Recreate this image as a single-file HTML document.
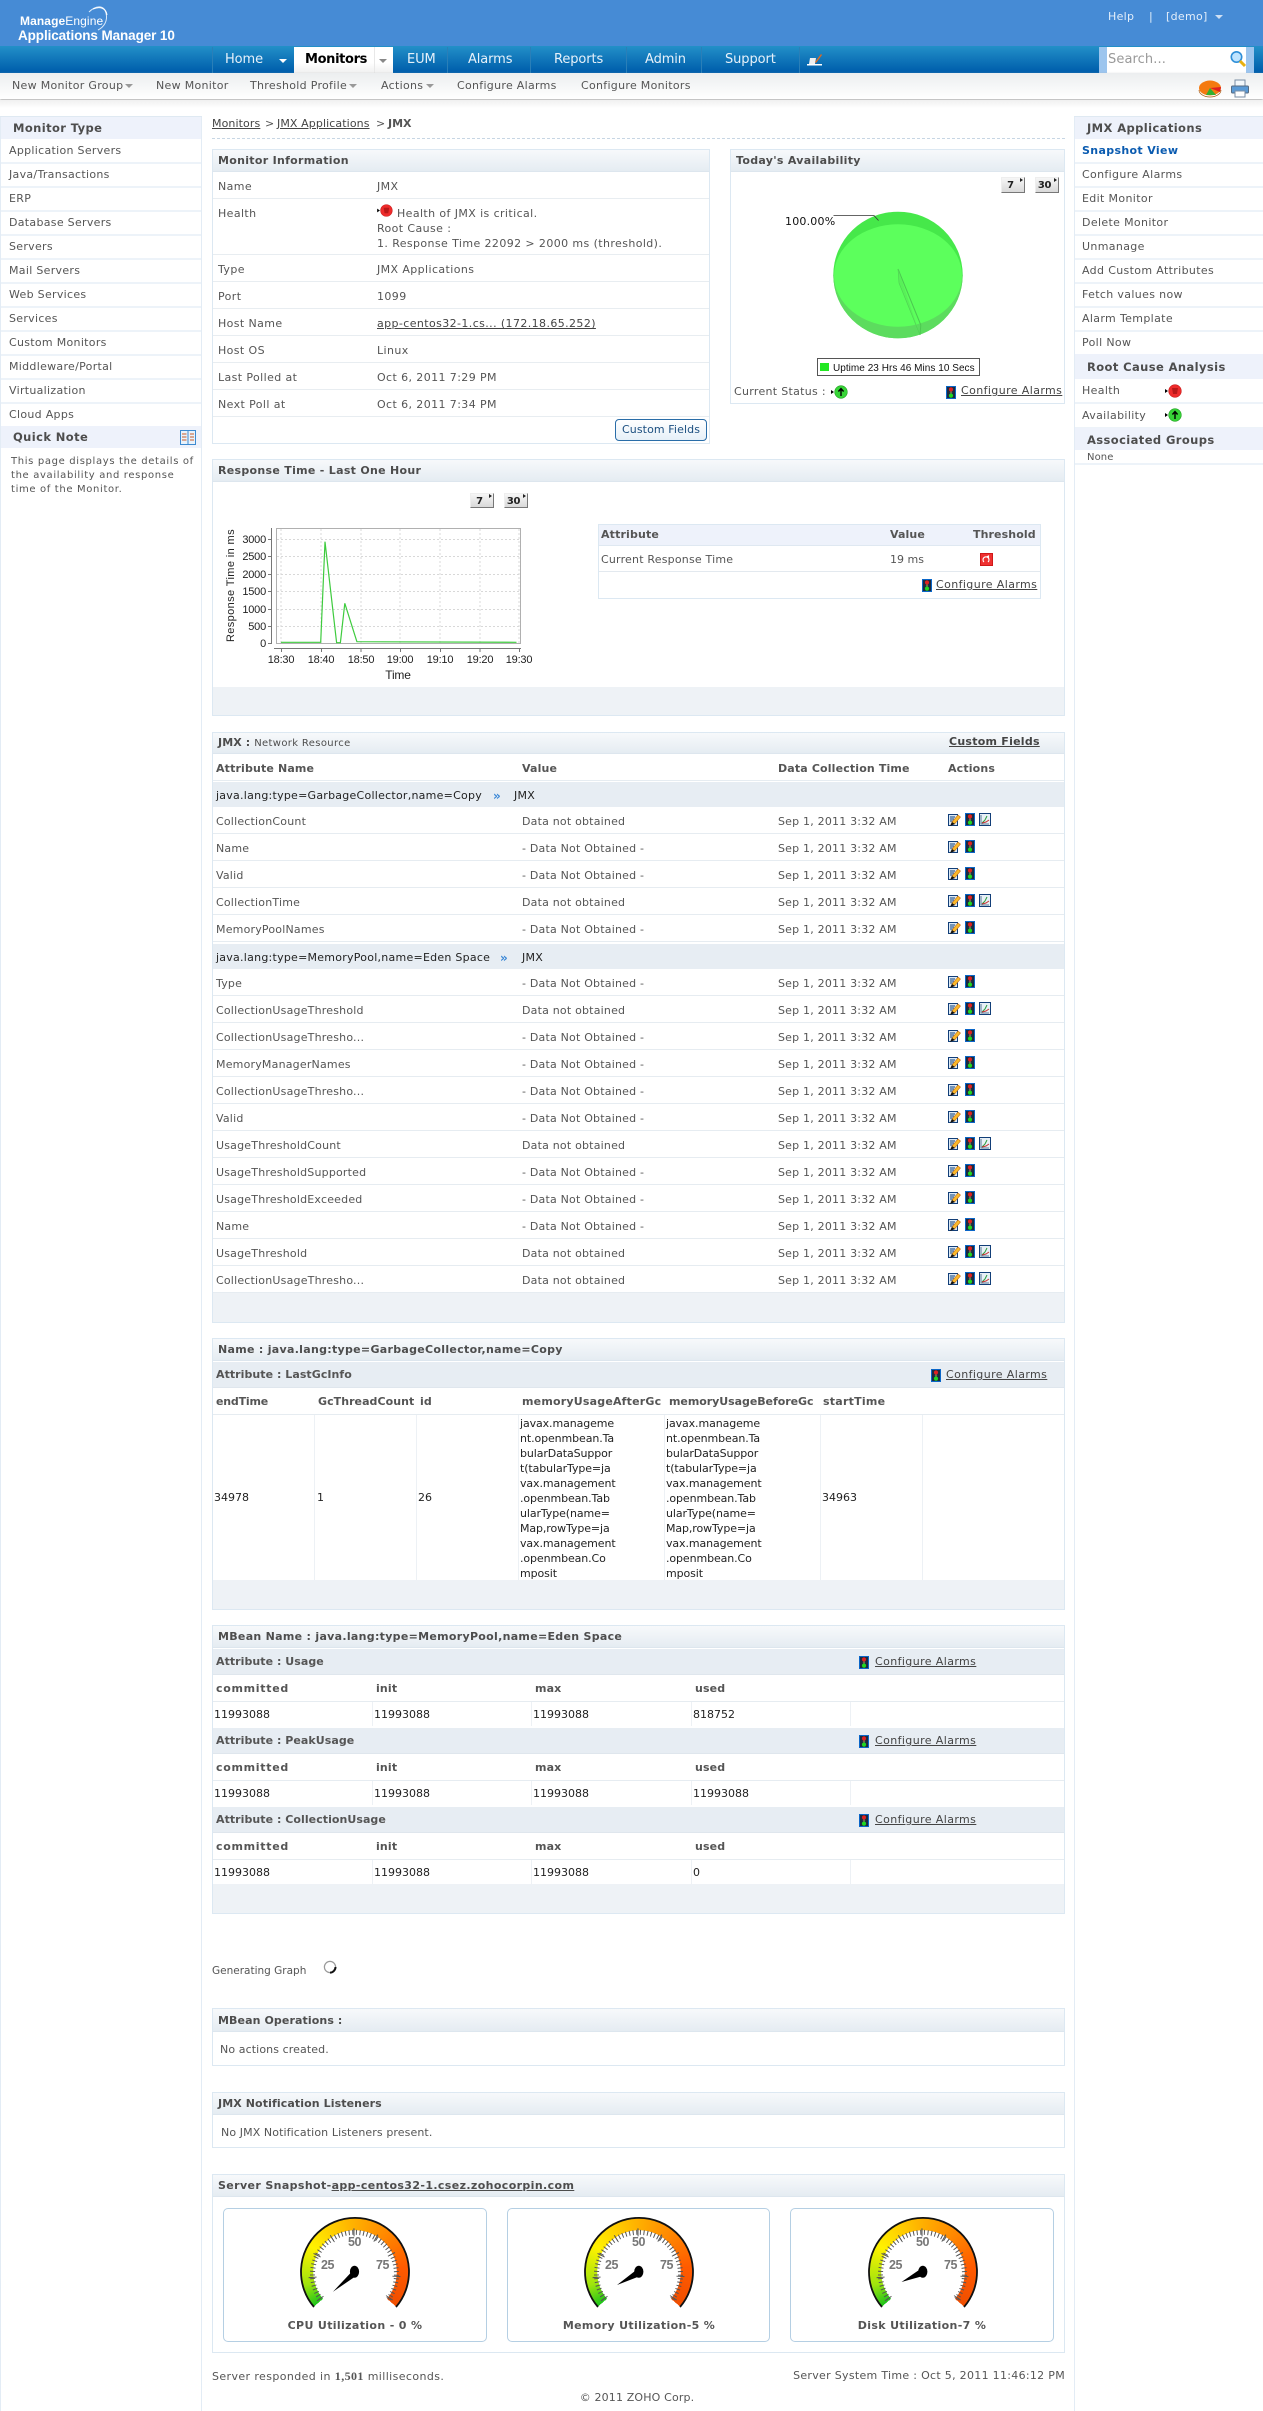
<!DOCTYPE html>
<html lang="en"><head><meta charset="utf-8"><title>JMX - Applications Manager</title>
<style>
html,body{margin:0;padding:0;background:#fff}
body{position:relative;width:1263px;height:2411px;overflow:hidden;font:11px/16px "DejaVu Sans","Liberation Sans",sans-serif;color:#555;letter-spacing:.4px}
div,span,a,b{position:absolute;white-space:nowrap}
a{color:#444;text-decoration:underline}
b{font-weight:bold}
.box{box-sizing:border-box;border:1px solid #dce8f2;background:#fff}
.hd{box-sizing:border-box;left:212px;width:853px;background:linear-gradient(#f7f9fb,#e5ecf2);border:1px solid #dce8f2;border-bottom:1px solid #dde6ee;font-weight:bold;color:#4d4d4d;padding-left:5px;letter-spacing:.35px}
.sh{background:#eef2fb;font-weight:bold;color:#4d4d4d;font-size:11.5px}
.it{left:1px;width:200px;height:23px;border-bottom:2px solid #edf3f9;letter-spacing:.3px}
.it span{left:8px;top:4px}
.ir{left:1075px;width:188px;height:23px;border-bottom:2px solid #edf3f9;letter-spacing:.35px}
.ir span{left:7px;top:4px}
.nav{color:#e6f1fa;font-size:13px;line-height:16px;top:52px;font-family:"DejaVu Sans",sans-serif;letter-spacing:-.1px}
.sep{top:47px;width:1px;height:26px;background:#2a7fb8}
.sub{top:78px;color:#555;letter-spacing:.3px}
.ar{width:0;height:0;border-left:4px solid transparent;border-right:4px solid transparent;border-top:4px solid #999}
.mi{left:213px;width:496px;border-bottom:1px solid #e8edf1}
.mi span{top:7px;left:5px}.mi i{position:absolute;font-style:normal;top:7px;left:164px;white-space:nowrap}
.btn{box-sizing:border-box;background:linear-gradient(#f6f6f6,#d9d9d9);border-right:1px solid #777;border-bottom:1px solid #777;border-top:1px solid #eee;border-left:1px solid #eee;font-weight:bold;color:#222;font-size:10px;text-align:center;line-height:15px;letter-spacing:-.3px;padding-right:5px}
.btn::after{content:"";position:absolute;right:1px;top:0;border-left:3px solid #222;border-top:2.5px solid transparent;border-bottom:2.5px solid transparent}
.r{left:213px;width:851px;height:26px;border-bottom:1px solid #e6ecf1;background:#fff}
.r span{top:7px;letter-spacing:.2px}.r .a{left:3px}.r .b{left:309px}.r .c{left:565px}
.gr{left:213px;width:851px;height:25px;background:#e7edf3;border-bottom:1px solid #dfe6ed;color:#222;letter-spacing:.25px}
.gr span{top:6px}
.th{font-weight:bold;color:#555;letter-spacing:.15px}
.cm{letter-spacing:.7px}
.ft{left:213px;width:851px;background:#eef2f6}
.d{color:#222;letter-spacing:0}
.v{width:1px;background:#edf1f5}
.at{left:213px;width:851px;height:25px;background:#e7edf3;border-bottom:1px solid #dfe6ed;font-weight:bold;color:#555;letter-spacing:.05px}
.at span{top:5px;left:3px}
.ln{left:213px;width:851px;height:1px;background:#e6ecf1}
.gb{box-sizing:border-box;top:2208px;height:134px;border:1px solid #b5cfe3;border-radius:5px;background:#fff}
.gc{font-weight:bold;color:#555;top:2318px;width:264px;text-align:center;letter-spacing:.35px}
.ga{top:2218px;width:108px;height:108px;border-radius:50%;background:conic-gradient(from 230deg,#1fc41a 0deg,#9fe40d 25deg,#fff200 70deg,#ffb400 125deg,#ff8c00 165deg,#ff5a00 215deg,#f04e00 260deg,transparent 260deg);-webkit-mask:radial-gradient(circle,transparent 41.5px,#000 42px);mask:radial-gradient(circle,transparent 41.5px,#000 42px)}
</style></head><body>

<!-- top bar -->
<div style="left:0;top:0;width:1263px;height:47px;background:#468bd5"></div>
<div style="left:0;top:46px;width:1263px;height:27px;background:linear-gradient(#2390c8,#0160ad 90%)"></div>
<div style="left:20px;top:14px;color:#fff;font:12px/14px 'Liberation Sans',sans-serif;letter-spacing:.1px"><span style="position:static;font-weight:bold">Manage</span>Engine</div>
<div style="left:18px;top:28px;color:#fff;font:bold 13.5px/16px 'Liberation Sans',sans-serif;letter-spacing:-.1px">Applications Manager 10</div>
<div style="left:1108px;top:9px;color:#e3eefa;letter-spacing:.3px">Help</div>
<div style="left:1149px;top:9px;color:#e3eefa">|</div>
<div style="left:1166px;top:9px;color:#e3eefa;letter-spacing:.3px">[demo]</div>
<div class="ar" style="left:1215px;top:15px;border-top-color:#cfe0f4"></div>

<div class="sep" style="left:212px"></div>
<div class="nav" style="left:225px">Home</div>
<div class="ar" style="left:279px;top:59px;border-top-color:#fff"></div>
<div style="left:294px;top:47px;width:99px;height:26px;background:linear-gradient(#fff 60%,#f0f0f0)"></div>
<div class="nav" style="left:305px;color:#000;font-weight:bold;letter-spacing:-.35px">Monitors</div>
<div style="left:374px;top:47px;width:1px;height:26px;background:#e8e8e8"></div>
<div class="ar" style="left:379px;top:59px;border-top-color:#888"></div>
<div class="nav" style="left:407px">EUM</div>
<div class="sep" style="left:447px"></div>
<div class="nav" style="left:468px">Alarms</div>
<div class="sep" style="left:530px"></div>
<div class="nav" style="left:554px">Reports</div>
<div class="sep" style="left:626px"></div>
<div class="nav" style="left:645px">Admin</div>
<div class="sep" style="left:701px"></div>
<div class="nav" style="left:725px">Support</div>
<div class="sep" style="left:799px"></div>
<div style="left:1099px;top:47px;width:155px;height:26px;background:#9cc5ee"></div>
<div style="left:1107px;top:47px;width:139px;height:26px;background:#fff"></div>
<div style="left:1108px;top:52px;color:#999;font-size:13px;line-height:16px;letter-spacing:.1px">Search...</div>

<!-- subnav -->
<div style="left:0;top:73px;width:1263px;height:26px;background:linear-gradient(#eceeef,#fff);box-shadow:0 1px 2px #aaa"></div>
<div style="left:0;top:100px;width:1263px;height:8px;background:linear-gradient(#f0f0f0,#fff)"></div>
<div class="sub" style="left:12px">New Monitor Group</div><div class="ar" style="left:125px;top:84px"></div>
<div class="sub" style="left:156px">New Monitor</div>
<div class="sub" style="left:250px">Threshold Profile</div><div class="ar" style="left:349px;top:84px"></div>
<div class="sub" style="left:381px">Actions</div><div class="ar" style="left:426px;top:84px"></div>
<div class="sub" style="left:457px">Configure Alarms</div>
<div class="sub" style="left:581px">Configure Monitors</div>

<!-- side borders -->
<div style="left:0;top:116px;width:1px;height:2295px;background:#e3ecf5"></div>
<div style="left:201px;top:116px;width:1px;height:2295px;background:#e3ecf5"></div>
<div style="left:1074px;top:116px;width:1px;height:2295px;background:#e3ecf5"></div>
<div style="left:0;top:116px;width:202px;height:1px;background:#dfe9f2"></div>
<div style="left:1074px;top:116px;width:189px;height:1px;background:#dfe9f2"></div>

<!-- left sidebar -->
<div class="sh" style="left:1px;top:117px;width:200px;height:22px"><span style="left:12px;top:3px">Monitor Type</span></div>
<div class="it" style="top:139px"><span>Application Servers</span></div>
<div class="it" style="top:163px"><span>Java/Transactions</span></div>
<div class="it" style="top:187px"><span>ERP</span></div>
<div class="it" style="top:211px"><span>Database Servers</span></div>
<div class="it" style="top:235px"><span>Servers</span></div>
<div class="it" style="top:259px"><span>Mail Servers</span></div>
<div class="it" style="top:283px"><span>Web Services</span></div>
<div class="it" style="top:307px"><span>Services</span></div>
<div class="it" style="top:331px"><span>Custom Monitors</span></div>
<div class="it" style="top:355px"><span>Middleware/Portal</span></div>
<div class="it" style="top:379px"><span>Virtualization</span></div>
<div class="it" style="top:403px;border:0"><span>Cloud Apps</span></div>
<div class="sh" style="left:1px;top:426px;width:200px;height:22px"><span style="left:12px;top:3px">Quick Note</span></div>
<div style="left:11px;top:454px;font-size:10px;letter-spacing:.65px">This page displays the details of</div>
<div style="left:11px;top:468px;font-size:10px;letter-spacing:.65px">the availability and response</div>
<div style="left:11px;top:482px;font-size:10px;letter-spacing:.65px">time of the Monitor.</div>

<!-- right sidebar -->
<div class="sh" style="left:1075px;top:117px;width:188px;height:22px"><span style="left:12px;top:3px">JMX Applications</span></div>
<div class="ir" style="top:139px"><span style="font-weight:bold;color:#0a5bb0">Snapshot View</span></div>
<div class="ir" style="top:163px"><span>Configure Alarms</span></div>
<div class="ir" style="top:187px"><span>Edit Monitor</span></div>
<div class="ir" style="top:211px"><span>Delete Monitor</span></div>
<div class="ir" style="top:235px"><span>Unmanage</span></div>
<div class="ir" style="top:259px"><span>Add Custom Attributes</span></div>
<div class="ir" style="top:283px"><span>Fetch values now</span></div>
<div class="ir" style="top:307px"><span>Alarm Template</span></div>
<div class="ir" style="top:331px;border:0"><span>Poll Now</span></div>
<div class="sh" style="left:1075px;top:354px;width:188px;height:25px"><span style="left:12px;top:5px">Root Cause Analysis</span></div>
<div class="ir" style="top:379px"><span>Health</span></div>
<div class="ir" style="top:403px;height:24px"><span style="top:5px">Availability</span></div>
<div class="sh" style="left:1075px;top:428px;width:188px;height:22px"><span style="left:12px;top:4px">Associated Groups</span></div>
<div class="ir" style="top:450px;height:13px"><span style="left:12px;top:0;font-size:10px;letter-spacing:.1px">None</span></div>

<!-- breadcrumb -->
<a style="left:212px;top:116px;letter-spacing:.1px">Monitors</a><div style="left:265px;top:116px">&gt;</div>
<a style="left:277px;top:116px;letter-spacing:.1px">JMX Applications</a><div style="left:376px;top:116px">&gt;</div>
<b style="left:388px;top:116px;letter-spacing:0">JMX</b>
<div style="left:212px;top:138px;width:853px;height:0;border-top:1px dashed #c7d6e4"></div>

<!-- monitor info -->
<div class="box" style="left:212px;top:149px;width:498px;height:295px"></div>
<div class="hd" style="top:149px;width:498px;height:23px;line-height:22px;letter-spacing:.3px">Monitor Information</div>
<div class="mi" style="top:172px;height:26px"><span>Name</span><i>JMX</i></div>
<div class="mi" style="top:199px;height:55px"><span>Health</span>
<i style="left:184px">Health of JMX is critical.</i><i style="top:22px">Root Cause :</i><i style="top:37px">1. Response Time 22092 &gt; 2000 ms (threshold).</i></div>
<div class="mi" style="top:255px;height:26px"><span>Type</span><i>JMX Applications</i></div>
<div class="mi" style="top:282px;height:26px"><span>Port</span><i>1099</i></div>
<div class="mi" style="top:309px;height:26px"><span>Host Name</span><i style="text-decoration:underline;color:#444">app-centos32-1.cs... (172.18.65.252)</i></div>
<div class="mi" style="top:336px;height:26px"><span>Host OS</span><i>Linux</i></div>
<div class="mi" style="top:363px;height:26px"><span>Last Polled at</span><i>Oct 6, 2011 7:29 PM</i></div>
<div class="mi" style="top:390px;height:26px"><span>Next Poll at</span><i>Oct 6, 2011 7:34 PM</i></div>
<div style="box-sizing:border-box;left:615px;top:419px;width:92px;height:22px;border:1px solid #2a6da8;border-radius:4px;background:linear-gradient(#fff,#e6f0f8);color:#1c4f80;text-align:center;line-height:20px;letter-spacing:.1px">Custom Fields</div>

<!-- availability -->
<div class="box" style="left:730px;top:149px;width:335px;height:255px"></div>
<div class="hd" style="left:730px;top:149px;width:335px;height:23px;line-height:22px;letter-spacing:.3px">Today's Availability</div>
<div class="btn" style="left:1001px;top:177px;width:24px;height:16px">7</div>
<div class="btn" style="left:1035px;top:177px;width:24px;height:16px">30</div>
<div style="left:785px;top:214px;color:#111;letter-spacing:.2px">100.00%</div>
<div style="box-sizing:border-box;left:817px;top:358px;width:163px;height:18px;border:1px solid #555;background:#fff"></div>
<div style="left:820px;top:363px;width:9px;height:8px;background:#22e822"></div>
<div style="left:734px;top:384px;letter-spacing:.3px">Current Status :</div>
<a style="left:961px;top:383px;letter-spacing:.4px">Configure Alarms</a>

<!-- response time -->
<div class="box" style="left:212px;top:459px;width:853px;height:257px"></div>
<div class="hd" style="top:459px;height:23px;line-height:22px;letter-spacing:.3px">Response Time - Last One Hour</div>
<div class="btn" style="left:470px;top:493px;width:24px;height:15px">7</div>
<div class="btn" style="left:504px;top:493px;width:24px;height:15px">30</div>
<div class="box" style="left:598px;top:524px;width:443px;height:75px"></div>
<div style="left:599px;top:525px;width:441px;height:20px;background:#eef2fb;border-bottom:1px solid #dfe8f1"></div>
<b style="left:601px;top:527px;letter-spacing:.15px">Attribute</b><b style="left:890px;top:527px;letter-spacing:.1px">Value</b><b style="left:973px;top:527px;letter-spacing:.1px">Threshold</b>
<div style="left:601px;top:552px;letter-spacing:.2px">Current Response Time</div><div style="left:890px;top:552px;letter-spacing:0">19 ms</div>
<div style="left:599px;top:571px;width:441px;height:1px;background:#e3e9ef"></div>
<a style="left:936px;top:577px;letter-spacing:.4px">Configure Alarms</a>
<div class="ft" style="top:687px;height:28px"></div>

<!-- JMX table -->
<div class="box" style="left:212px;top:732px;width:853px;height:591px"></div>
<div class="hd" style="top:732px;height:22px;line-height:20px;letter-spacing:.1px">JMX : <span style="position:static;font-weight:normal;font-size:10px;letter-spacing:.35px">Network Resource</span></div>
<a style="left:949px;top:734px;font-weight:bold;letter-spacing:.25px">Custom Fields</a>
<div class="th" style="left:216px;top:761px">Attribute Name</div><div class="th" style="left:522px;top:761px">Value</div>
<div class="th" style="left:778px;top:761px">Data Collection Time</div><div class="th" style="left:948px;top:761px">Actions</div>
<div class="ln" style="top:780px"></div>
<div class="gr" style="top:782px"><span style="left:3px">java.lang:type=GarbageCollector,name=Copy</span><span style="left:280px;color:#3a87d6;font-weight:bold;font-size:12px">»</span><span style="left:301px">JMX</span></div>
<div class="r" style="top:807px"><span class="a">CollectionCount</span><span class="b">Data not obtained</span><span class="c">Sep 1, 2011 3:32 AM</span></div>
<div class="r" style="top:834px"><span class="a">Name</span><span class="b">- Data Not Obtained -</span><span class="c">Sep 1, 2011 3:32 AM</span></div>
<div class="r" style="top:861px"><span class="a">Valid</span><span class="b">- Data Not Obtained -</span><span class="c">Sep 1, 2011 3:32 AM</span></div>
<div class="r" style="top:888px"><span class="a">CollectionTime</span><span class="b">Data not obtained</span><span class="c">Sep 1, 2011 3:32 AM</span></div>
<div class="r" style="top:915px"><span class="a">MemoryPoolNames</span><span class="b">- Data Not Obtained -</span><span class="c">Sep 1, 2011 3:32 AM</span></div>
<div class="gr" style="top:944px"><span style="left:3px">java.lang:type=MemoryPool,name=Eden Space</span><span style="left:287px;color:#3a87d6;font-weight:bold;font-size:12px">»</span><span style="left:309px">JMX</span></div>
<div class="r" style="top:969px"><span class="a">Type</span><span class="b">- Data Not Obtained -</span><span class="c">Sep 1, 2011 3:32 AM</span></div>
<div class="r" style="top:996px"><span class="a">CollectionUsageThreshold</span><span class="b">Data not obtained</span><span class="c">Sep 1, 2011 3:32 AM</span></div>
<div class="r" style="top:1023px"><span class="a">CollectionUsageThresho...</span><span class="b">- Data Not Obtained -</span><span class="c">Sep 1, 2011 3:32 AM</span></div>
<div class="r" style="top:1050px"><span class="a">MemoryManagerNames</span><span class="b">- Data Not Obtained -</span><span class="c">Sep 1, 2011 3:32 AM</span></div>
<div class="r" style="top:1077px"><span class="a">CollectionUsageThresho...</span><span class="b">- Data Not Obtained -</span><span class="c">Sep 1, 2011 3:32 AM</span></div>
<div class="r" style="top:1104px"><span class="a">Valid</span><span class="b">- Data Not Obtained -</span><span class="c">Sep 1, 2011 3:32 AM</span></div>
<div class="r" style="top:1131px"><span class="a">UsageThresholdCount</span><span class="b">Data not obtained</span><span class="c">Sep 1, 2011 3:32 AM</span></div>
<div class="r" style="top:1158px"><span class="a">UsageThresholdSupported</span><span class="b">- Data Not Obtained -</span><span class="c">Sep 1, 2011 3:32 AM</span></div>
<div class="r" style="top:1185px"><span class="a">UsageThresholdExceeded</span><span class="b">- Data Not Obtained -</span><span class="c">Sep 1, 2011 3:32 AM</span></div>
<div class="r" style="top:1212px"><span class="a">Name</span><span class="b">- Data Not Obtained -</span><span class="c">Sep 1, 2011 3:32 AM</span></div>
<div class="r" style="top:1239px"><span class="a">UsageThreshold</span><span class="b">Data not obtained</span><span class="c">Sep 1, 2011 3:32 AM</span></div>
<div class="r" style="top:1266px"><span class="a">CollectionUsageThresho...</span><span class="b">Data not obtained</span><span class="c">Sep 1, 2011 3:32 AM</span></div>
<div class="ft" style="top:1293px;height:29px"></div>

<!-- Name box -->
<div class="box" style="left:212px;top:1338px;width:853px;height:272px"></div>
<div class="hd" style="top:1338px;height:23px;line-height:21px;letter-spacing:.3px">Name : java.lang:type=GarbageCollector,name=Copy</div>
<div class="at" style="top:1362px"><span>Attribute : LastGcInfo</span></div>
<a style="left:946px;top:1367px;letter-spacing:.4px">Configure Alarms</a>
<div class="th" style="left:216px;top:1394px;letter-spacing:-.2px">endTime</div><div class="th" style="left:318px;top:1394px;letter-spacing:.05px">GcThreadCount</div><div class="th" style="left:420px;top:1394px">id</div>
<div class="th" style="left:522px;top:1394px;letter-spacing:.2px">memoryUsageAfterGc</div><div class="th" style="left:669px;top:1394px;letter-spacing:-.05px">memoryUsageBeforeGc</div><div class="th" style="left:823px;top:1394px;letter-spacing:.25px">startTime</div>
<div class="ln" style="top:1414px"></div>
<div class="v" style="left:314px;top:1415px;height:165px"></div><div class="v" style="left:416px;top:1415px;height:165px"></div><div class="v" style="left:518px;top:1415px;height:165px"></div><div class="v" style="left:664px;top:1415px;height:165px"></div><div class="v" style="left:820px;top:1415px;height:165px"></div><div class="v" style="left:922px;top:1415px;height:165px"></div>
<div class="d" style="left:214px;top:1490px">34978</div><div class="d" style="left:317px;top:1490px">1</div><div class="d" style="left:418px;top:1490px">26</div><div class="d" style="left:822px;top:1490px">34963</div>
<div class="d" style="left:520px;top:1416px;line-height:15px;letter-spacing:-.1px">javax.manageme<br>nt.openmbean.Ta<br>bularDataSuppor<br>t(tabularType=ja<br>vax.management<br>.openmbean.Tab<br>ularType(name=<br>Map,rowType=ja<br>vax.management<br>.openmbean.Co<br>mposit</div>
<div class="d" style="left:666px;top:1416px;line-height:15px;letter-spacing:-.1px">javax.manageme<br>nt.openmbean.Ta<br>bularDataSuppor<br>t(tabularType=ja<br>vax.management<br>.openmbean.Tab<br>ularType(name=<br>Map,rowType=ja<br>vax.management<br>.openmbean.Co<br>mposit</div>
<div class="ft" style="top:1580px;height:29px"></div>

<!-- MBean box -->
<div class="box" style="left:212px;top:1625px;width:853px;height:289px"></div>
<div class="hd" style="top:1625px;height:23px;line-height:22px;letter-spacing:.3px">MBean Name : java.lang:type=MemoryPool,name=Eden Space</div>
<div class="at" style="top:1649px"><span>Attribute : Usage</span></div>
<a style="left:875px;top:1654px;letter-spacing:.4px">Configure Alarms</a>
<div class="th cm" style="left:216px;top:1681px">committed</div><div class="th" style="left:376px;top:1681px">init</div><div class="th" style="left:535px;top:1681px">max</div><div class="th" style="left:695px;top:1681px">used</div>
<div class="ln" style="top:1701px"></div>
<div class="d" style="left:214px;top:1707px">11993088</div><div class="d" style="left:374px;top:1707px">11993088</div><div class="d" style="left:533px;top:1707px">11993088</div><div class="d" style="left:693px;top:1707px">818752</div>
<div class="v" style="left:372px;top:1702px;height:24px"></div><div class="v" style="left:531px;top:1702px;height:24px"></div><div class="v" style="left:691px;top:1702px;height:24px"></div><div class="v" style="left:850px;top:1702px;height:24px"></div>
<div class="at" style="top:1728px"><span>Attribute : PeakUsage</span></div>
<a style="left:875px;top:1733px;letter-spacing:.4px">Configure Alarms</a>
<div class="th cm" style="left:216px;top:1760px">committed</div><div class="th" style="left:376px;top:1760px">init</div><div class="th" style="left:535px;top:1760px">max</div><div class="th" style="left:695px;top:1760px">used</div>
<div class="ln" style="top:1780px"></div>
<div class="d" style="left:214px;top:1786px">11993088</div><div class="d" style="left:374px;top:1786px">11993088</div><div class="d" style="left:533px;top:1786px">11993088</div><div class="d" style="left:693px;top:1786px">11993088</div>
<div class="v" style="left:372px;top:1781px;height:24px"></div><div class="v" style="left:531px;top:1781px;height:24px"></div><div class="v" style="left:691px;top:1781px;height:24px"></div><div class="v" style="left:850px;top:1781px;height:24px"></div>
<div class="at" style="top:1807px"><span>Attribute : CollectionUsage</span></div>
<a style="left:875px;top:1812px;letter-spacing:.4px">Configure Alarms</a>
<div class="th cm" style="left:216px;top:1839px">committed</div><div class="th" style="left:376px;top:1839px">init</div><div class="th" style="left:535px;top:1839px">max</div><div class="th" style="left:695px;top:1839px">used</div>
<div class="ln" style="top:1859px"></div>
<div class="d" style="left:214px;top:1865px">11993088</div><div class="d" style="left:374px;top:1865px">11993088</div><div class="d" style="left:533px;top:1865px">11993088</div><div class="d" style="left:693px;top:1865px">0</div>
<div class="v" style="left:372px;top:1860px;height:24px"></div><div class="v" style="left:531px;top:1860px;height:24px"></div><div class="v" style="left:691px;top:1860px;height:24px"></div><div class="v" style="left:850px;top:1860px;height:24px"></div>
<div class="ft" style="top:1884px;height:29px"></div>

<div style="left:212px;top:1963px;letter-spacing:0;font-size:10.5px">Generating Graph</div>

<div class="box" style="left:212px;top:2008px;width:853px;height:58px"></div>
<div class="hd" style="top:2008px;height:24px;line-height:23px;letter-spacing:.1px">MBean Operations :</div>
<div style="left:220px;top:2042px;letter-spacing:.1px">No actions created.</div>

<div class="box" style="left:212px;top:2092px;width:853px;height:56px"></div>
<div class="hd" style="top:2092px;height:23px;line-height:22px;letter-spacing:.1px">JMX Notification Listeners</div>
<div style="left:221px;top:2125px;letter-spacing:.1px">No JMX Notification Listeners present.</div>

<!-- Snapshot -->
<div class="box" style="left:212px;top:2174px;width:853px;height:179px"></div>
<div class="hd" style="top:2174px;height:23px;line-height:22px;letter-spacing:.38px">Server Snapshot-<span style="position:static;text-decoration:underline">app-centos32-1.csez.zohocorpin.com</span></div>
<div class="gb" style="left:223px;width:264px"></div>
<div class="gb" style="left:507px;width:263px"></div>
<div class="gb" style="left:790px;width:264px"></div>
<div class="ga" style="left:301px"></div><div class="ga" style="left:585px"></div><div class="ga" style="left:869px"></div>
<div class="gc" style="left:223px">CPU Utilization - 0 %</div>
<div class="gc" style="left:507px">Memory Utilization-5 %</div>
<div class="gc" style="left:790px">Disk Utilization-7 %</div>

<div style="left:212px;top:2368px;letter-spacing:.4px">Server responded in <span style="position:static;font-weight:bold;font-family:'Liberation Serif',serif;font-size:12px">1,501</span> milliseconds.</div>
<div style="right:198px;top:2368px;letter-spacing:.3px">Server System Time : Oct 5, 2011 11:46:12 PM</div>
<div style="left:437px;width:400px;text-align:center;top:2390px;letter-spacing:.15px">© 2011 ZOHO Corp.</div>

<!-- vector overlay -->
<svg width="1263" height="2411" viewBox="0 0 1263 2411" style="position:absolute;left:0;top:0;pointer-events:none">
<defs>
<symbol id="light" viewBox="0 0 10 13"><rect x=".5" y=".5" width="9" height="12" fill="#1c2a3f" stroke="#0a66c8"/><circle cx="5" cy="3.5" r="2.1" fill="#e02020"/><circle cx="5" cy="6.6" r="1.2" fill="#6a6a50"/><circle cx="5" cy="9.6" r="2.1" fill="#1fd81f"/></symbol>
<symbol id="edit" viewBox="0 0 13 13"><rect x=".5" y="1.5" width="9" height="11" fill="#dbe9f5" stroke="#123e78"/><path d="M2 4h5M2 6h4M2 8h3" stroke="#123e78"/><path d="M3 12l1-3 6-7 2.5 2-6 7z" fill="#fbbb2a" stroke="#c8701a" stroke-width=".6"/><path d="M2 13l2-4 3 2z" fill="#111"/></symbol>
<symbol id="graph" viewBox="0 0 12 13"><rect x=".5" y=".5" width="11" height="12" fill="#e8f0f6" stroke="#123e78"/><path d="M2 2v9h8" fill="none" stroke="#5a7a96"/><path d="M3 10l3-3 2-4" fill="none" stroke="#2a9a3a"/><path d="M3 10l4-1 3-2" fill="none" stroke="#c83030"/></symbol>
<symbol id="up" viewBox="0 0 18 14"><path d="M0 5l3 2-3 2z" fill="#000"/><circle cx="10" cy="7" r="6.3" fill="#37d437" stroke="#22a022" stroke-width=".6"/><path d="M10 11V4M7.4 6.5L10 3.6l2.6 2.9" fill="none" stroke="#000" stroke-width="1.4"/></symbol>
<symbol id="down" viewBox="0 0 18 14"><path d="M0 5l3 2-3 2z" fill="#000"/><circle cx="10" cy="7" r="6.3" fill="#ee2b2b" stroke="#c81c1c" stroke-width=".6"/><path d="M7 4h6l-1 6H8z" fill="#b81818"/></symbol>
<g id="i3"><use href="#edit" width="13" height="13"/><use href="#light" x="17" width="10" height="13"/><use href="#graph" x="31" width="12" height="13"/></g>
<g id="i2"><use href="#edit" width="13" height="13"/><use href="#light" x="17" width="10" height="13"/></g>
</defs>

<!-- logo swoosh -->
<path d="M89 12C96 5 104 5 106 13C108 21 104 27 98 30" fill="none" stroke="#dcebfa" stroke-width="1"/>
<path d="M93 9C100 6 106 8 107 15" fill="none" stroke="#fff" stroke-width="1"/>
<!-- note pen -->
<path d="M807 64h15v1.5h-15z" fill="#fff"/><path d="M810 58h6l-1 6h-6z" fill="#f0f0f0"/><path d="M815 62l6-8 1 1-6 8z" fill="#e06a20"/>
<!-- search -->
<circle cx="1236.5" cy="57" r="5.2" fill="#bfe4ff" stroke="#2f8fd8" stroke-width="1.6"/><path d="M1240 61l5 5" stroke="#e8b010" stroke-width="3"/>
<!-- sub icons -->
<ellipse cx="1210" cy="88" rx="11" ry="7.5" fill="#f47a10"/><path d="M1210 88l11-1-1 5z" fill="#e02020"/><path d="M1210 88l6 7h-10z" fill="#30b030"/><path d="M1199 90a11 7 0 0 0 22 0" fill="none" stroke="#a85a10" stroke-width=".7"/>
<rect x="1235" y="80" width="10" height="7" fill="#f4f8fb" stroke="#7a8ea4"/><rect x="1231.5" y="86" width="17" height="7" rx="1" fill="#5a9ad6" stroke="#566b82"/><rect x="1235" y="91" width="10" height="6" fill="#fff" stroke="#7a8ea4"/>
<!-- side icons -->
<use href="#down" x="377" y="204" width="17" height="13"/>
<use href="#up" x="831" y="385" width="18" height="14"/>
<use href="#down" x="1165" y="384" width="18" height="14"/>
<use href="#up" x="1165" y="408" width="18" height="14"/>
<use href="#light" x="946" y="386" width="10" height="13"/>
<use href="#light" x="922" y="579" width="10" height="13"/>
<rect x="980.5" y="553.5" width="12" height="12" fill="#ee3030" stroke="#d01818"/><path d="M984 562a3 3 0 1 1 4 0M986.5 557l2-1v2.5" fill="none" stroke="#fff" stroke-width="1.1"/>
<use href="#light" x="931" y="1369" width="10" height="13"/>
<use href="#light" x="859" y="1656" width="10" height="13"/>
<use href="#light" x="859" y="1735" width="10" height="13"/>
<use href="#light" x="859" y="1814" width="10" height="13"/>
<!-- quick note -->
<rect x="180.5" y="430.5" width="15" height="14" fill="#e8f2fb" stroke="#3d8ad0"/><path d="M188 431v13" stroke="#3d8ad0"/><path d="M182 434h4.5M182 437h4.5M182 440h4.5M190 434h4M190 437h4M190 440h4" stroke="#c85a2a"/>
<!-- action icons -->
<use href="#i3" x="948" y="813"/><use href="#i2" x="948" y="840"/><use href="#i2" x="948" y="867"/><use href="#i3" x="948" y="894"/><use href="#i2" x="948" y="921"/>
<use href="#i2" x="948" y="975"/><use href="#i3" x="948" y="1002"/><use href="#i2" x="948" y="1029"/><use href="#i2" x="948" y="1056"/><use href="#i2" x="948" y="1083"/><use href="#i2" x="948" y="1110"/><use href="#i3" x="948" y="1137"/><use href="#i2" x="948" y="1164"/><use href="#i2" x="948" y="1191"/><use href="#i2" x="948" y="1218"/><use href="#i3" x="948" y="1245"/><use href="#i3" x="948" y="1272"/>

<!-- pie -->
<ellipse cx="898" cy="275" rx="64.7" ry="63.3" fill="#46e84a"/>
<path d="M833.3 275A64.7 63.3 0 0 0 962.7 275Z" fill="#5cdc5e"/>
<ellipse cx="898" cy="275.5" rx="64" ry="51.2" fill="#5cff5c"/>
<path d="M898 269L920.8 325L920 335" fill="none" stroke="#4cc850" stroke-width="1"/><path d="M898 269L899 283L920 335" fill="#58f058" stroke="#50d054" stroke-width=".6"/>
<path d="M833.5 215.5H874L878.5 220.5" fill="none" stroke="#333" stroke-width=".8"/>
<text x="833" y="371" font-family="Liberation Sans,sans-serif" font-size="10" fill="#111" textLength="142" lengthAdjust="spacing">Uptime 23 Hrs 46 Mins 10 Secs</text>

<!-- chart -->
<rect x="276.5" y="528.5" width="244" height="115" fill="#fff" stroke="#b0b0b0"/>
<g stroke="#d8d8d8" stroke-dasharray="2 2" fill="none"><path d="M281 529V643M321 529V643M361 529V643M400 529V643M440 529V643M480 529V643M519 529V643M277 539.5H520M277 556.5H520M277 574.5H520M277 591.5H520M277 609.5H520M277 626.5H520"/></g>
<path d="M271.5 528V644M268 539.5h3.5M268 556.5h3.5M268 574.5h3.5M268 591.5h3.5M268 609.5h3.5M268 626.5h3.5M268 643.5h3.5M274 648.5H521M281.5 649v3M321.5 649v3M361 649v3M400.5 649v3M440.5 649v3M480 649v3M519.5 649v3" stroke="#777" fill="none"/>
<path d="M281 642.3H320.7L325 541.7L336.6 642.7H340.4L344.8 603.3L356.9 641.7L516.5 642.3" fill="none" stroke="#3ecb3e" stroke-width="1.2"/>
<g font-family="Liberation Sans,sans-serif" font-size="11" fill="#222" letter-spacing="-.2" text-anchor="end">
<text x="266" y="543">3000</text><text x="266" y="560">2500</text><text x="266" y="578">2000</text><text x="266" y="595">1500</text><text x="266" y="613">1000</text><text x="266" y="630">500</text><text x="266" y="647">0</text></g>
<g font-family="Liberation Sans,sans-serif" font-size="11" fill="#222" letter-spacing="-.2" text-anchor="middle">
<text x="281" y="663">18:30</text><text x="321" y="663">18:40</text><text x="361" y="663">18:50</text><text x="400" y="663">19:00</text><text x="440" y="663">19:10</text><text x="480" y="663">19:20</text><text x="519" y="663">19:30</text>
<text x="398" y="679" font-size="12">Time</text></g>
<text transform="translate(234,642) rotate(-90)" font-family="Liberation Sans,sans-serif" font-size="11" fill="#222" textLength="113">Response Time in ms</text>

<!-- spinner -->
<circle cx="330" cy="1967" r="5.6" fill="none" stroke="#999" stroke-width="1.2"/><path d="M335.5 1967A5.6 5.6 0 0 1 330 1972.6" fill="none" stroke="#111" stroke-width="2"/>

<!-- gauges -->
<g id="gauge">
<path d="M314 2307A54 54 0 1 1 396 2307" fill="none" stroke="#111" stroke-width="1.8"/>
<path d="M320.5 2299A42 42 0 1 1 388.5 2299" fill="none" stroke="#555" stroke-width="5" stroke-dasharray="1 2.6"/>
<path d="M320.5 2299A42 42 0 1 1 388.5 2299" fill="none" stroke="#555" stroke-width="8" stroke-dasharray="1 21.8"/>
<g font-family="Liberation Sans,sans-serif" font-size="12.5" font-weight="bold" fill="#777" text-anchor="middle" letter-spacing="-.4"><text x="354.5" y="2246">50</text><text x="327.5" y="2269">25</text><text x="382.5" y="2269">75</text></g>
</g>
<use href="#gauge" x="284"/><use href="#gauge" x="568"/>
<ellipse cx="354.5" cy="2271.7" rx="4.6" ry="6" fill="#000"/><path d="M351.5 2272L356 2276L333 2291.7Z" fill="#000"/>
<ellipse cx="638.8" cy="2271.7" rx="4.6" ry="6" fill="#000"/><path d="M635 2271L640 2276L617 2285Z" fill="#000"/>
<ellipse cx="922.8" cy="2271.7" rx="4.6" ry="6" fill="#000"/><path d="M919 2270L923 2276L901.5 2282Z" fill="#000"/>
</svg>
</body></html>
